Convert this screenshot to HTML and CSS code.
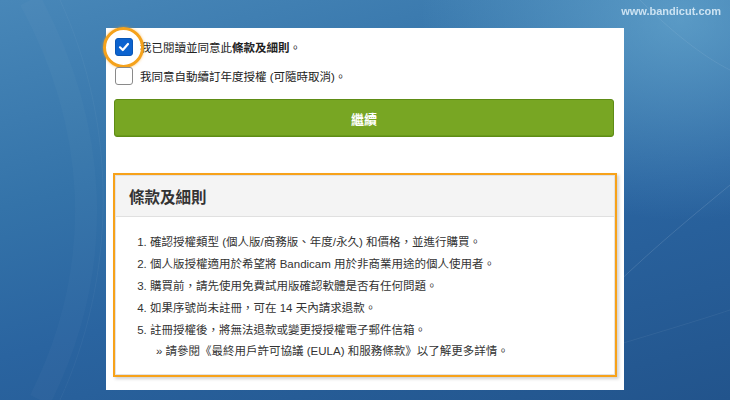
FILE: index.html
```html
<!DOCTYPE html>
<html lang="zh-Hant">
<head>
  <meta charset="UTF-8" />
  <title>條款及細則</title>
  <link rel="stylesheet" href="styles.css">
</head>
<body>
  <svg class="bg-lines" width="730" height="400" viewBox="0 0 730 400">
    <path d="M30 0 C 95 120, 110 260, 40 400" fill="none" stroke="rgba(255,255,255,0.025)" stroke-width="22"/>
    <path d="M60 0 C 120 130, 115 280, 60 400" fill="none" stroke="rgba(255,255,255,0.04)" stroke-width="1"/>
    <path d="M600 300 C 650 250, 700 210, 730 185" fill="none" stroke="rgba(255,255,255,0.12)" stroke-width="1"/>
    <path d="M600 350 C 650 335, 700 320, 730 310" fill="none" stroke="rgba(255,255,255,0.06)" stroke-width="1"/>
    <path d="M640 0 C 680 40, 710 60, 730 70" fill="none" stroke="rgba(255,255,255,0.08)" stroke-width="1"/>
  </svg>
  <div class="site-url">www.bandicut.com</div>

  <main class="panel">
    <div class="agree">
      <label class="agree-row">
        <span class="box checked">
          <svg width="12" height="12" viewBox="0 0 12 12"><path d="M2 6.3 L4.8 9 L10 3" fill="none" stroke="#fff" stroke-width="2.2" stroke-linecap="round" stroke-linejoin="round"/></svg>
        </span>
        <span>我已閱讀並同意此<b>條款及細則</b>。</span>
      </label>
      <label class="agree-row">
        <span class="box"></span>
        <span>我同意自動續訂年度授權 (可隨時取消)。</span>
      </label>
    </div>

    <button class="continue-btn">繼續</button>

    <section class="terms">
      <h2 class="terms-title">條款及細則</h2>
      <ol class="terms-list">
        <li>確認授權類型 (個人版/商務版、年度/永久) 和價格，並進行購買。</li>
        <li>個人版授權適用於希望將 Bandicam 用於非商業用途的個人使用者。</li>
        <li>購買前，請先使用免費試用版確認軟體是否有任何問題。</li>
        <li>如果序號尚未註冊，可在 14 天內請求退款。</li>
        <li>註冊授權後，將無法退款或變更授授權電子郵件信箱。
          <div class="more">» 請參閱《最終用戶許可協議 (EULA) 和服務條款》以了解更多詳情。</div>
        </li>
      </ol>
    </section>
  </main>
</body>
</html>
```

FILE: styles.css
```css
/* Fondo azul */
body {
  margin: 0;
  width: 730px; height: 400px;
  overflow: hidden;
  font-family: "Liberation Sans", "Noto Sans CJK TC", sans-serif;
  color: #333;
  background:
    radial-gradient(ellipse 260px 200px at 680px 20px, rgba(120,185,220,0.55), transparent),
    linear-gradient(165deg, #4887b8 0%, #3473a9 35%, #2a64a0 60%, #22548c 100%);
}
.bg-lines {
  position: fixed;
  top: 0; left: 0;
  z-index: 0;
}
.site-url {
  position: absolute;
  top: 5px; right: 9px;
  font-size: 11px;
  font-weight: bold;
  color: rgba(225,240,250,0.85);
}

/* Panel blanco */
.panel {
  position: relative;
  z-index: 1;
  box-sizing: border-box;
  width: 518px; height: 362px;
  margin: 28px auto 0;
  padding: 10px 7px 0 8px;
  background: #fff;
}

/* Casillas */
.agree { display: flex; flex-direction: column; gap: 11px; }
.agree-row {
  display: flex;
  align-items: center;
  gap: 7px;
  margin-left: 1px;
  font-size: 11.5px;
  color: #222;
}
.agree-row b { font-weight: bold; }
.box {
  box-sizing: border-box;
  width: 18px; height: 18px;
  border: 1px solid #8a8a8a;
  border-radius: 3px;
  background: #fff;
  display: flex; align-items: center; justify-content: center;
  position: relative;
}
.box.checked {
  background: #0c63cf;
  border-color: #0a56b5;
}
.box.checked::after {
  content: "";
  position: absolute;
  left: -13px; top: -12px;
  width: 35px; height: 35px;
  border: 3px solid #f5a21b;
  border-radius: 50%;
  box-shadow: 0 0 3px rgba(245,162,27,0.6);
}

/* Boton */
.continue-btn {
  display: block;
  width: 500px; height: 38px;
  margin: 14px 0 0;
  border: 1px solid #5e8c15;
  border-radius: 3px;
  background: #78a623;
  color: #fff;
  font-family: inherit;
  font-size: 13px;
  font-weight: bold;
  box-shadow: inset 0 -1px 0 #6a9a1a;
}

/* Terminos */
.terms {
  width: 504px;
  box-sizing: border-box;
  margin: 36px 0 0 -1px;
  border: 2px solid #f7a21a;
  box-shadow: 2px 2px 3px rgba(0,0,0,0.18);
  background: #fff;
  height: 204px;
  outline: 1px solid #e2e2e2;
  outline-offset: -3px;
}
.terms-title {
  margin: 0;
  height: 41px;
  padding: 0 0 0 14px;
  display: flex; align-items: center;
  background: #f4f4f4;
  border-bottom: 1px solid #e0e0e0;
  font-size: 15.5px;
  font-weight: bold;
  color: #333;
}
.terms-list {
  margin: 14px 0 0;
  padding: 0 0 0 35px;
  font-size: 11.5px;
  color: #333;
}
.terms-list li { line-height: 22px; }
.terms-list .more {
  line-height: 20px;
  padding-left: 6px;
}
```
